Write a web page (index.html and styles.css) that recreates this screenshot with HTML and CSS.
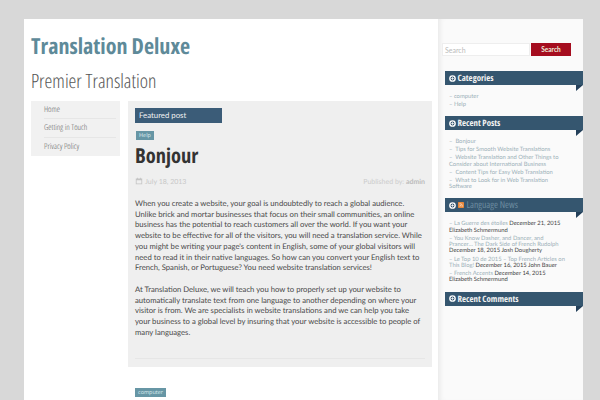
FILE: index.html
```html
<!DOCTYPE html>
<html lang="en">
<head>
<meta charset="utf-8">
<title>Translation Deluxe</title>
<link rel="stylesheet" href="styles.css">
</head>
<body>
<div class="wrap">
  <main class="main">
    <header class="head">
      <h1 class="title">Translation Deluxe</h1>
      <p class="tagline">Premier Translation</p>
    </header>
    <div class="cols">
      <nav class="nav">
        <a class="nav-item">Home</a>
        <a class="nav-item">Getting in Touch</a>
        <a class="nav-item">Privacy Policy</a>
      </nav>
      <div class="content">
        <article class="post">
          <div class="featured">Featured post</div>
          <span class="tag">Help</span>
          <h2 class="post-title">Bonjour</h2>
          <div class="meta">
            <span class="date"><svg class="cal" viewBox="0 0 10 10"><path fill="#c4c4c4" d="M1 2h1.5V1h1v1h3V1h1v1H9v7H1zM2 4v4h6V4z"/></svg>July 18, 2013</span>
            <span class="by">Published by: <b>admin</b></span>
          </div>
          <p class="para">When you create a website, your goal is undoubtedly to reach a global audience.<br>Unlike brick and mortar businesses that focus on their small communities, an online<br>business has the potential to reach customers all over the world. If you want your<br>website to be effective for all of the visitors, you will need a translation service. While<br>you might be writing your page's content in English, some of your global visitors will<br>need to read it in their native languages. So how can you convert your English text to<br>French, Spanish, or Portuguese? You need website translation services!</p>
          <p class="para">At Translation Deluxe, we will teach you how to properly set up your website to<br>automatically translate text from one language to another depending on where your<br>visitor is from. We are specialists in website translations and we can help you take<br>your business to a global level by insuring that your website is accessible to people of<br>many languages.</p>
          <div class="rule"></div>
        </article>
        <span class="tag tag-next">computer</span>
      </div>
    </div>
  </main>
  <aside class="side">
    <form class="search">
      <input class="search-input" placeholder="Search">
      <button class="search-btn" type="button">Search</button>
    </form>
    <section class="widget">
      <h3 class="w-title"><svg class="circ" viewBox="0 0 10 10"><circle cx="5" cy="5" r="3.8" fill="none" stroke="#fff" stroke-width="2"/><path d="M3 5h4M5 3v4" stroke="#fff" stroke-width="1"/></svg>Categories</h3>
      <ul class="list">
        <li>– computer</li>
        <li>– Help</li>
      </ul>
    </section>
    <section class="widget">
      <h3 class="w-title"><svg class="circ" viewBox="0 0 10 10"><circle cx="5" cy="5" r="3.8" fill="none" stroke="#fff" stroke-width="2"/><path d="M3 5h4M5 3v4" stroke="#fff" stroke-width="1"/></svg>Recent Posts</h3>
      <ul class="list">
        <li>–&nbsp; Bonjour</li>
        <li>–&nbsp; Tips for Smooth Website Translations</li>
        <li>–&nbsp; Website Translation and Other Things to<br>Consider about International Business</li>
        <li>–&nbsp; Content Tips for Easy Web Translation</li>
        <li>–&nbsp; What to Look for in Web Translation<br>Software</li>
      </ul>
    </section>
    <section class="widget">
      <h3 class="w-title news"><svg class="circ" viewBox="0 0 10 10"><circle cx="5" cy="5" r="3.8" fill="none" stroke="#fff" stroke-width="2"/><path d="M3 5h4M5 3v4" stroke="#fff" stroke-width="1"/></svg><svg class="rss" viewBox="0 0 8 8"><rect width="8" height="8" rx="1" fill="#e8883a"/><path d="M2 6h.5M2 4a2 2 0 0 1 2 2M2 2a4 4 0 0 1 4 4" stroke="#fff" fill="none" stroke-width=".8"/></svg>Language News</h3>
      <ul class="list news-list">
        <li>– La Guerre des étoiles <span class="dk">December 21, 2015<br>Elizabeth Schmermund</span></li>
        <li>– You Know Dasher, and Dancer, and<br>Prancer… The Dark Side of French Rudolph<br><span class="dk">December 18, 2015 Josh Dougherty</span></li>
        <li>– Le Top 10 de 2015 – Top French Articles on<br>This Blog! <span class="dk">December 16, 2015 John Bauer</span></li>
        <li>– French Accents <span class="dk">December 14, 2015<br>Elizabeth Schmermund</span></li>
      </ul>
    </section>
    <section class="widget">
      <h3 class="w-title"><svg class="circ" viewBox="0 0 10 10"><circle cx="5" cy="5" r="3.8" fill="none" stroke="#fff" stroke-width="2"/><path d="M3 5h4M5 3v4" stroke="#fff" stroke-width="1"/></svg>Recent Comments</h3>
    </section>
  </aside>
</div>
</body>
</html>
```

FILE: styles.css
```css
* { box-sizing: border-box; }
html, body { margin: 0; height: 400px; overflow: hidden; }
body { background: #d8d8d8; padding: 19px 24px 0; font-family: "Open Sans", "Noto Sans", sans-serif; text-rendering: geometricPrecision; }
.wrap { display: flex; width: 552px; height: 381px; background: #fff; }
.main { width: 414px; flex: none; padding: 0 7px; }
.head { height: 82px; padding-top: 12px; }
.title { margin: 0; font-size: 22.1px; line-height: 30px; font-weight: 700; font-stretch: 75%; color: #5e8a99; }
.tagline { margin: 7px 0 0; font-size: 19.7px; line-height: 26px; font-weight: 300; font-stretch: 75%; color: #555; }
.cols { display: flex; gap: 8px; }
.nav { width: 89px; flex: none; height: 55px; background: #f1f1f1; padding: 0 4px 0 13px; display: flex; flex-direction: column; }
.nav-item { height: 18.3px; font-size: 8.2px; line-height: 18px; font-weight: 300; font-stretch: 75%; color: #666; border-bottom: 1px solid #e6e6e6; }
.nav-item:last-child { border-bottom: 0; }
.content { width: 304px; flex: none; }
.post { background: #efefef; height: 266px; padding: 7px 7px 0; }
.featured { width: 87px; height: 15px; background: #3b5c78; color: #f2f2f2; font-family: Lato, sans-serif; font-size: 7.8px; line-height: 15px; padding-left: 4px; }
.tag { display: block; width: max-content; margin: 8px 0 0 1px; padding: 0 3px; height: 9px; background: #6796a5; color: #dcecef; font-size: 5.5px; line-height: 9px; }
.post-title { margin: 0; padding-top: 3px; font-size: 20.5px; line-height: 27px; font-stretch: 75%; font-weight: 700; color: #333; }
.meta { display: flex; justify-content: space-between; margin-top: 7px; height: 10px; font-family: Lato, sans-serif; font-size: 7px; line-height: 10px; color: #c8c8c8; }
.cal { width: 8px; height: 8px; margin-right: 2px; vertical-align: -1px; }
.by { color: #ccc; }
.by b { color: #bbb; }
.para { margin: 0 0 11px; font-family: Lato, sans-serif; font-size: 7.7px; line-height: 10.7px; color: #484848; white-space: nowrap; }
.meta + .para { margin-top: 11px; }
.rule { margin-top: 21px; border-top: 1px solid #e6e6e6; }
.tag-next { margin: 21px 0 0 7px; }
.side { flex: 1; background: #fafafa; box-shadow: inset 5px 0 5px -3px #e8e8e8; padding: 24px 0 0 4px; }
.search { display: flex; gap: 1px; height: 13px; margin-bottom: 15px; }
.search-input { width: 88px; height: 13px; border: 1px solid #eee; background: #fff; padding: 0 2px; font: 7px Lato, sans-serif; }
.search-input::placeholder { color: #bbb; }
.search-btn { width: 40px; height: 13px; padding: 0; border: 0; background: #a50d1f; color: #eed; font: 700 6.5px Lato, sans-serif; }
.widget { margin-bottom: 8px; }
.w-title { position: relative; margin: 0 0 0 3px; width: 138px; height: 14px; background: #35566f; color: #f2f2f2; font-size: 8.8px; line-height: 14px; font-weight: 700; font-stretch: 75%; display: flex; align-items: center; padding-left: 4px; }
.w-title::after { content: ""; position: absolute; right: 0; top: 14px; border-right: 7px solid transparent; border-top: 6px solid #24405a; }
.news { color: #6c8ca0; font-weight: 400; font-size: 9.6px; }
.circ { width: 7px; height: 7px; margin-right: 1.5px; flex: none; }
.rss { width: 6px; height: 6px; margin-right: 3px; flex: none; }
.list { margin: 0; padding: 9px 12px 0 7px; list-style: none; font-family: Lato, sans-serif; font-size: 5.85px; line-height: 6.3px; color: #9ab0b8; white-space: nowrap; }
.list li { margin-bottom: 1.7px; }
.news-list { line-height: 6.4px; }
.dk { color: #444; }
```
